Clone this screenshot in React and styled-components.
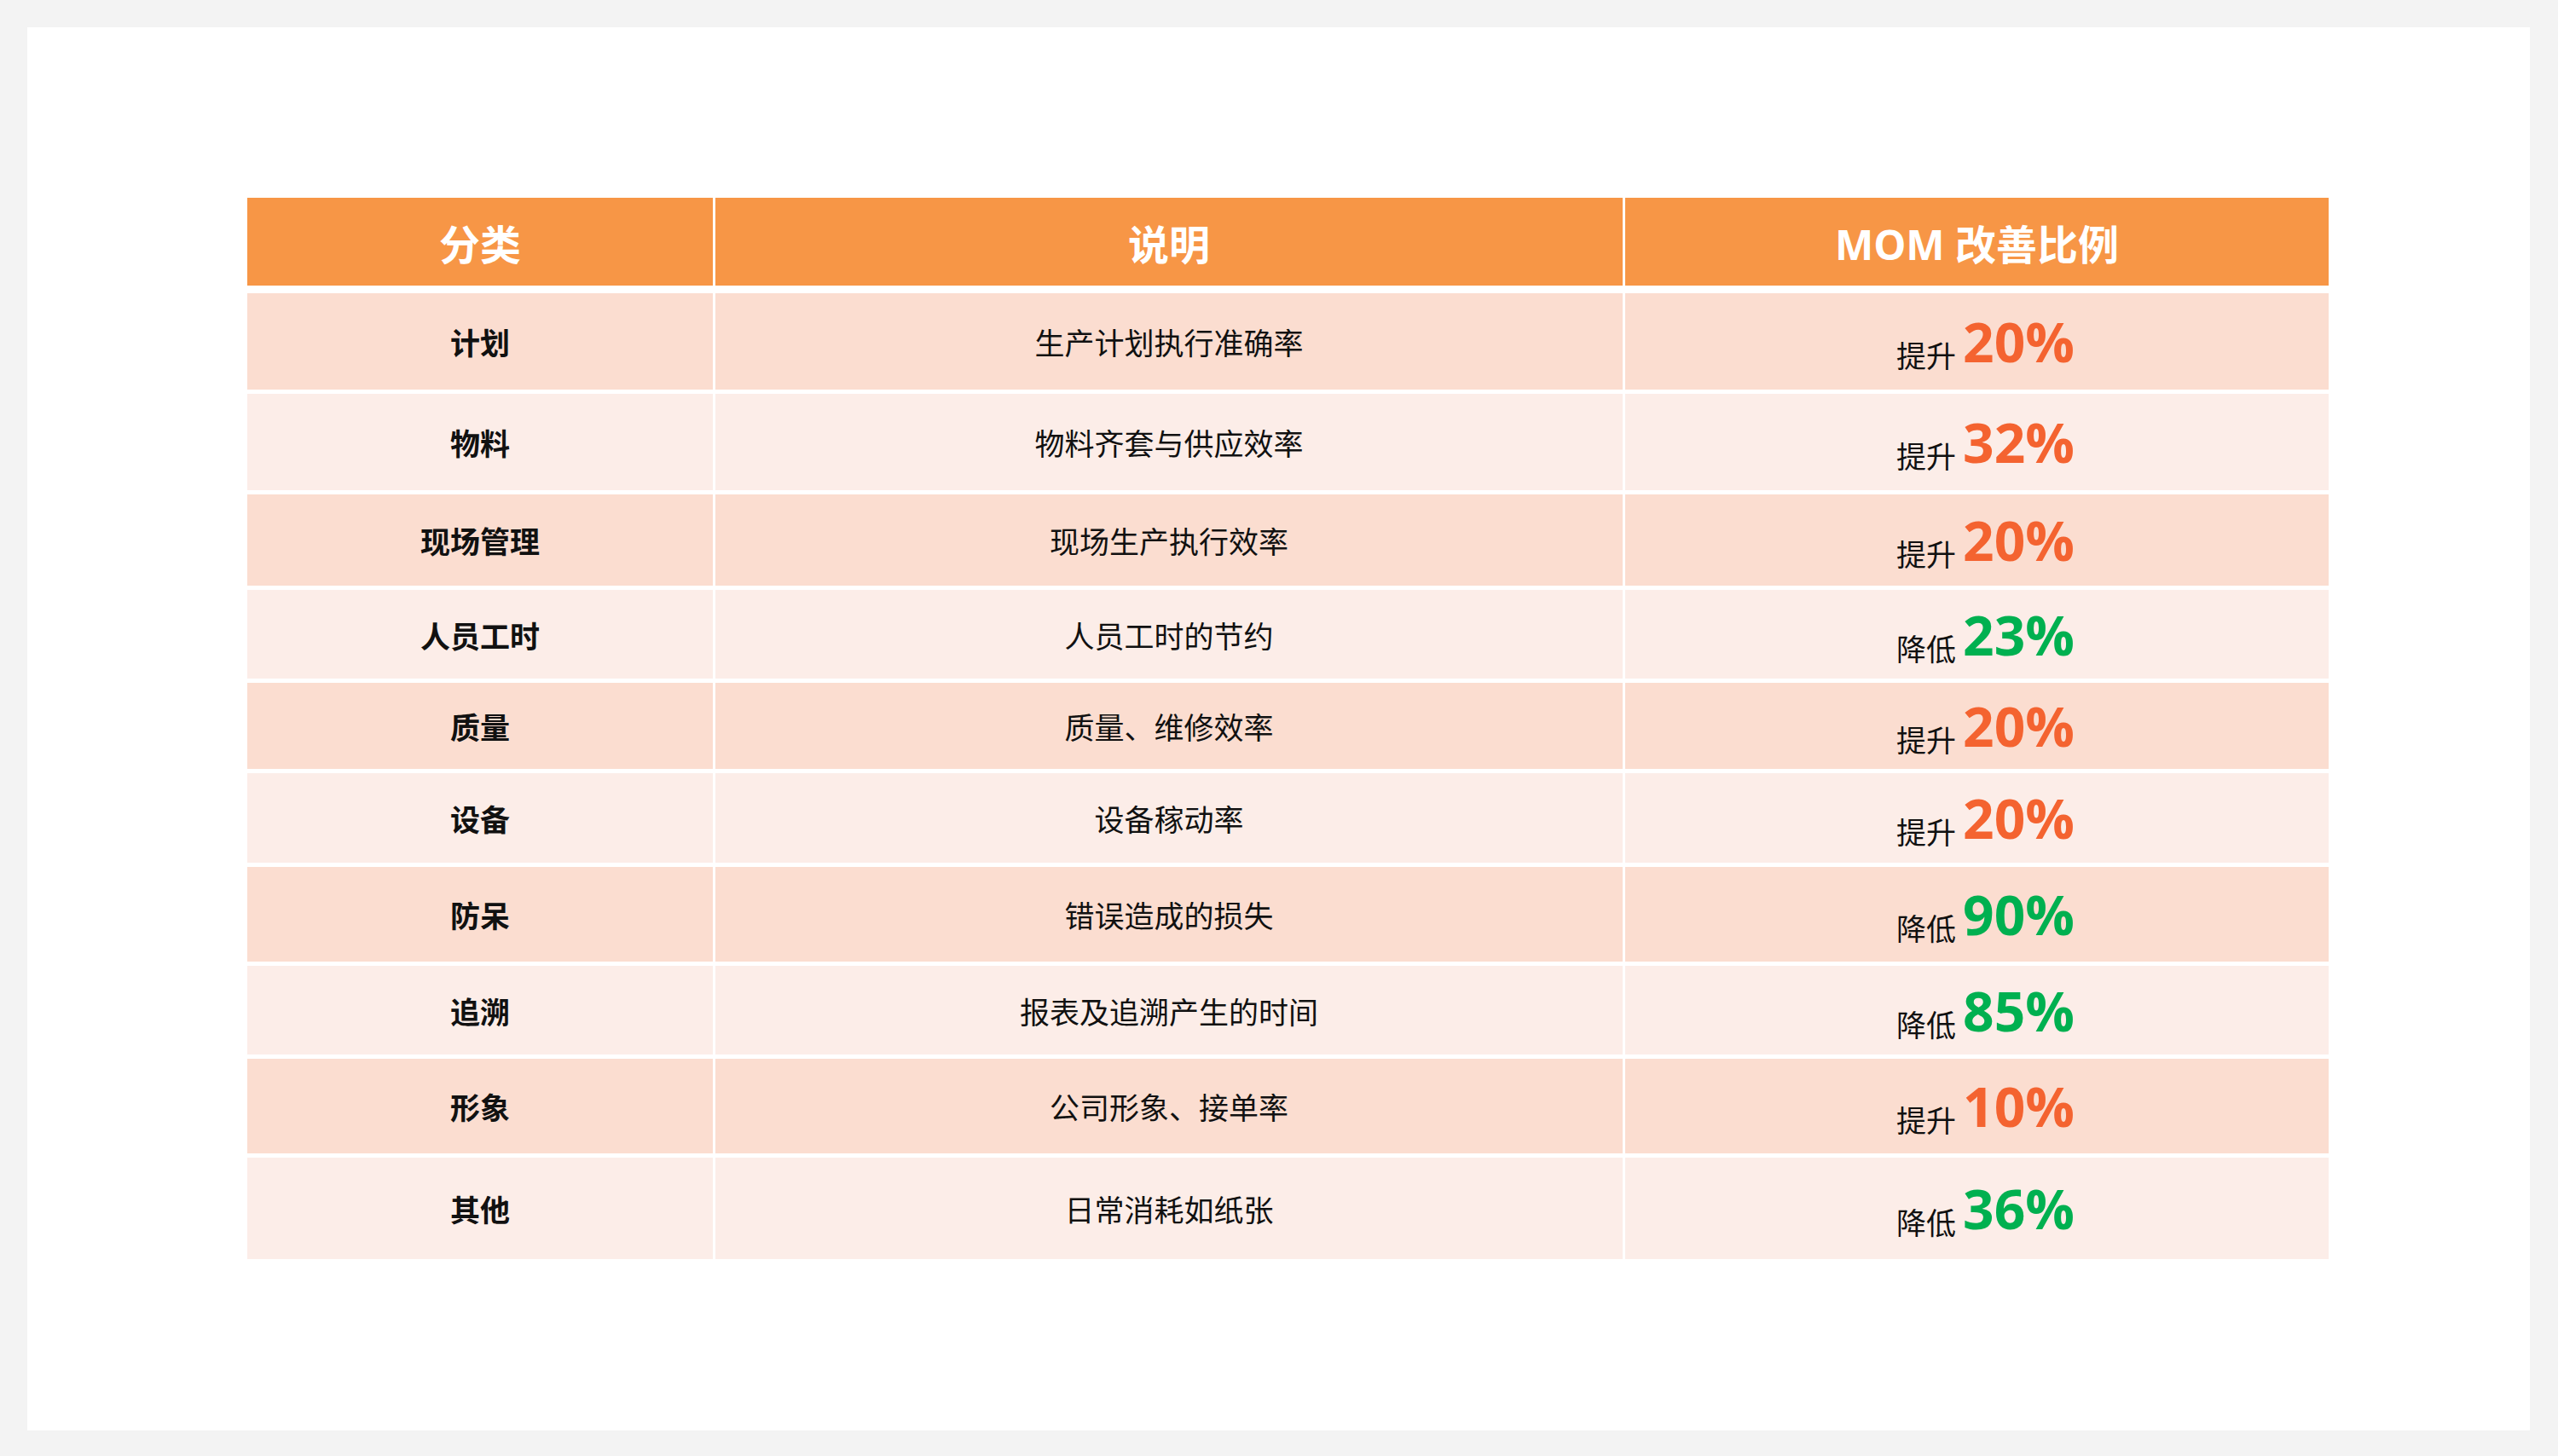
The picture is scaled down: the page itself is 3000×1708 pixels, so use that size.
import React from "react";
import styled, { createGlobalStyle } from "styled-components";

const Global = createGlobalStyle`
  html, body { margin: 0; background: #f3f3f3; }
  body { font-family: "Noto Sans CJK SC", "Open Sans", sans-serif; }
`;

const Page = styled.div`
  padding: 32px 33px 30px 32px;
`;
const Card = styled.div`
  background: #fff;
  height: 1646px;
  padding: 200px 0 0 258px;
  box-sizing: border-box;
`;
const Table = styled.div`
  width: 2441px;
  display: grid;
  grid-template-columns: 546px 1064px 825px;
  column-gap: 3px;
`;
const Head = styled.div`
  background: #f79646;
  height: 103px;
  margin-bottom: 9px;
  display: flex;
  align-items: center;
  justify-content: center;
  color: #fff;
  font-weight: 700;
  font-size: 48px;
  font-family: "Open Sans", "Noto Sans CJK SC", sans-serif;
`;
const Cell = styled.div`
  background: ${p => (p.$dark ? "#fbddd0" : "#fcede8")};
  height: ${p => p.$h}px;
  margin-bottom: 5px;
  display: flex;
  align-items: center;
  justify-content: center;
  color: #111;
  font-size: 35px;
  font-weight: ${p => (p.$bold ? 700 : 400)};
`;
const Verb = styled.span`
  font-size: 35px;
  position: relative;
  top: 6px;
  margin-right: 8px;
`;
const Pct = styled.span`
  font-family: "Open Sans", sans-serif;
  font-weight: 700;
  font-size: 64px;
  color: ${p => (p.$up ? "#f46330" : "#00b050")};
`;
const Value = styled.div`
  display: flex;
  align-items: baseline;
  margin-left: 20px;
`;

const rows = [
  ["计划", "生产计划执行准确率", "提升", "20%", 113],
  ["物料", "物料齐套与供应效率", "提升", "32%", 113],
  ["现场管理", "现场生产执行效率", "提升", "20%", 107],
  ["人员工时", "人员工时的节约", "降低", "23%", 104],
  ["质量", "质量、维修效率", "提升", "20%", 101],
  ["设备", "设备稼动率", "提升", "20%", 105],
  ["防呆", "错误造成的损失", "降低", "90%", 111],
  ["追溯", "报表及追溯产生的时间", "降低", "85%", 104],
  ["形象", "公司形象、接单率", "提升", "10%", 111],
  ["其他", "日常消耗如纸张", "降低", "36%", 119],
];

export default function App() {
  return (
    <Page>
      <Global />
      <Card>
        <Table>
          <Head>分类</Head>
          <Head>说明</Head>
          <Head>MOM 改善比例</Head>
          {rows.map(([a, b, v, p, h], i) => {
            const dark = i % 2 === 0;
            return (
              <React.Fragment key={i}>
                <Cell $dark={dark} $h={h} $bold>{a}</Cell>
                <Cell $dark={dark} $h={h}>{b}</Cell>
                <Cell $dark={dark} $h={h}>
                  <Value>
                    <Verb>{v}</Verb>
                    <Pct $up={v === "提升"}>{p}</Pct>
                  </Value>
                </Cell>
              </React.Fragment>
            );
          })}
        </Table>
      </Card>
    </Page>
  );
}
